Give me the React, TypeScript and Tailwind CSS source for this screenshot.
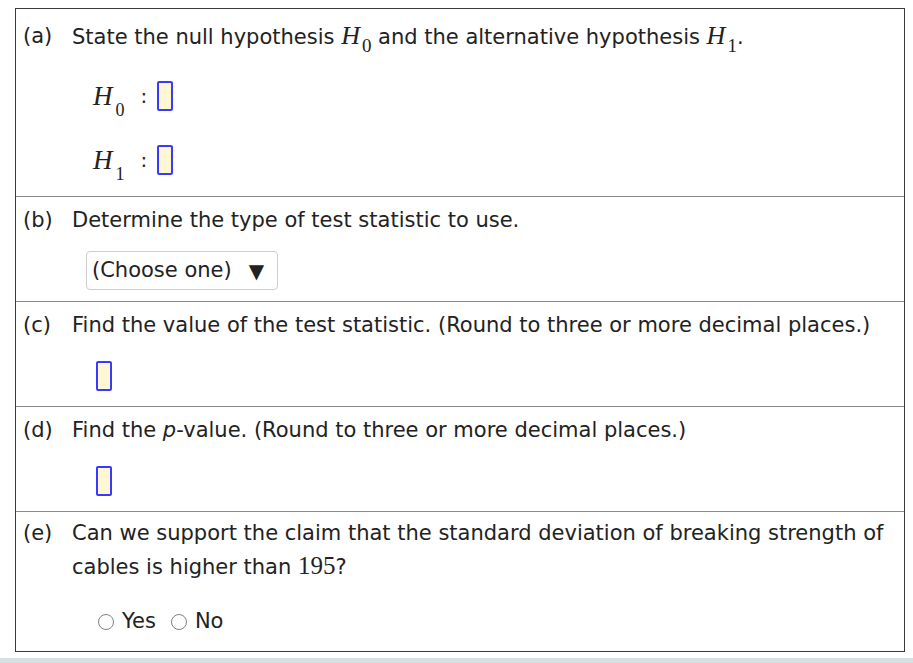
import React from 'react'

function Sym({ sub, big }: { sub: string; big?: boolean }) {
  return (
    <span className="inline-flex items-baseline font-['Liberation_Serif',serif]">
      <span className={`italic leading-none ${big ? 'text-[27px]' : 'text-[26px]'}`}>H</span>
      <span className={`relative leading-none ${big ? 'ml-[3px] top-[11px] text-[18px]' : 'ml-[2px] top-[8px] text-[19px]'}`}>{sub}</span>
    </span>
  )
}

function AnswerBox() {
  return <span className="block w-[16px] h-[30px] border-2 border-[#3a3aff] rounded-[2px] bg-[#fff7d4]" />
}

function Radio({ label }: { label: string }) {
  return (
    <label className="flex items-center gap-[8px]">
      <span className="block w-[16px] h-[16px] rounded-full border border-[#808080] bg-white" />
      <span>{label}</span>
    </label>
  )
}

function Row({
  label,
  children,
  first,
  pad,
  lead = 'leading-[26px]',
}: {
  label: string
  children: React.ReactNode
  first?: boolean
  pad: string
  lead?: string
}) {
  return (
    <div className={`flex ${pad} ${first ? '' : 'border-t border-[#8a8a8a]'}`}>
      <div className={`w-[56px] shrink-0 pl-[7px] ${lead}`}>{label}</div>
      <div className="flex-1 pr-[12px]">{children}</div>
    </div>
  )
}

export default function App() {
  return (
    <div className="min-h-[663px] bg-white font-['DejaVu_Sans',Verdana,sans-serif] text-[21px] text-[#222] flex flex-col">
      <div className="ml-[15px] mt-[8px] w-[890px] border border-[#3a3a3a]">
        <Row label="(a)" first pad="pt-[14px] pb-[21px]">
          <p className="leading-[26px] h-[26px]">
            State the null hypothesis <Sym sub="0" /> and the alternative hypothesis <Sym sub="1" />.
          </p>
          <div className="mt-[32px] pl-[21px] flex items-center h-[30px]">
            <Sym sub="0" big />
            <span className="ml-[16px] mr-[10px] text-[20px]">:</span>
            <AnswerBox />
          </div>
          <div className="mt-[34px] pl-[21px] flex items-center h-[30px]">
            <Sym sub="1" big />
            <span className="ml-[16px] mr-[10px] text-[20px]">:</span>
            <AnswerBox />
          </div>
        </Row>

        <Row label="(b)" pad="pt-[10px] pb-[11px]">
          <p className="leading-[26px]">Determine the type of test statistic to use.</p>
          <div className="mt-[18px] ml-[14px] w-[192px] h-[39px] border border-[#cfcfcf] rounded-[4px] flex items-center pl-[5px]">
            <span>(Choose one)</span>
            <span className="ml-[17px] text-[20px]">▼</span>
          </div>
        </Row>

        <Row label="(c)" pad="pt-[10px] pb-[15px]">
          <p className="leading-[26px]">Find the value of the test statistic. (Round to three or more decimal places.)</p>
          <div className="mt-[23px] ml-[24px]">
            <AnswerBox />
          </div>
        </Row>

        <Row label="(d)" pad="pt-[10px] pb-[15px]">
          <p className="leading-[26px]">
            Find the <span className="italic">p</span>-value. (Round to three or more decimal places.)
          </p>
          <div className="mt-[23px] ml-[24px]">
            <AnswerBox />
          </div>
        </Row>

        <Row label="(e)" pad="pt-[4px] pb-[17px]" lead="leading-[34px]">
          <p className="leading-[34px]">
            Can we support the claim that the standard deviation of breaking strength of
            <br />
            cables is higher than <span className="font-['Liberation_Serif',serif] text-[25px] leading-none">195</span>?
          </p>
          <div className="mt-[26px] ml-[26px] h-[24px] flex items-center gap-[15px]">
            <Radio label="Yes" />
            <Radio label="No" />
          </div>
        </Row>
      </div>
      <div className="flex-1" />
      <div className="h-[5px] bg-[#d6dfe2]" />
    </div>
  )
}
